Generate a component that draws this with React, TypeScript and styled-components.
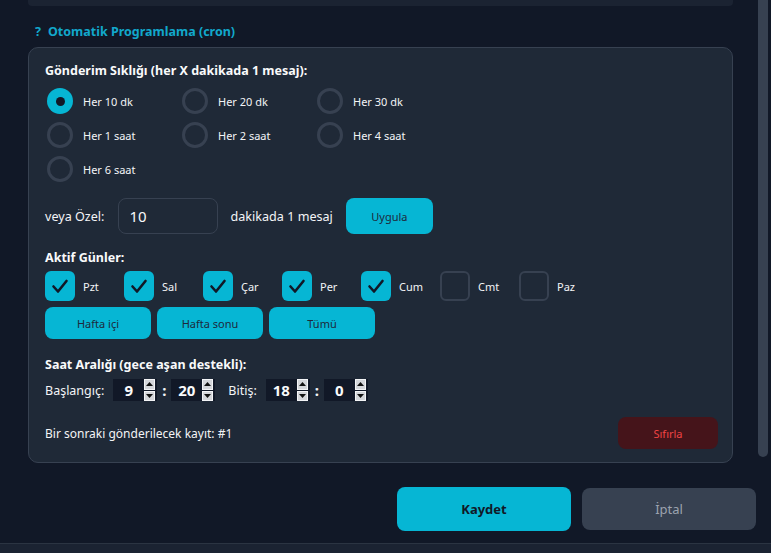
import React from 'react';
import styled, { createGlobalStyle } from 'styled-components';

const GlobalStyle = createGlobalStyle`
    html, body {
        margin: 0;
        padding: 0;
        background: #111827;
    }
    body {
        font-family: "Noto Sans", "Open Sans", sans-serif;
        color: #f3f4f6;
    }
    * {
        box-sizing: border-box;
    }
`;

const Page = styled.div`
    width: 771px;
    height: 553px;
    display: flex;
    flex-direction: column;
    overflow: hidden;
    background: #111827;
`;

const ScrollArea = styled.div`
    height: 470px;
    display: flex;
    flex-direction: row;
`;

const Content = styled.div`
    flex: 1;
    padding: 0 25px 0 28px;
    overflow: hidden;
`;

const TopStrip = styled.div`
    height: 6px;
    background: #1b2332;
    border-radius: 0 0 4px 4px;
`;

const ScrollTrack = styled.div`
    width: 13px;
    padding-right: 3px;
`;

const ScrollThumb = styled.div`
    width: 10px;
    height: 457px;
    background: #374151;
    border-radius: 0 0 5px 5px;
`;

const SectionTitle = styled.div`
    margin-top: 19px;
    padding-left: 7px;
    display: flex;
    gap: 7px;
    font-size: 12.5px;
    font-weight: 700;
    line-height: 14px;
    color: #12a8cc;
`;

const Card = styled.div`
    margin-top: 8px;
    height: 416px;
    background: #1f2937;
    border: 1px solid #374151;
    border-radius: 10px;
    padding: 14px 16px 0 16px;
`;

const Heading = styled.div<{ $gap?: number }>`
    margin-top: ${p => p.$gap ?? 0}px;
    font-size: 12.5px;
    font-weight: 700;
    line-height: 18px;
    color: #f9fafb;
`;

const RadioGrid = styled.div`
    margin-top: 8px;
    display: grid;
    grid-template-columns: repeat(3, 135px);
    row-gap: 8px;
`;

const RadioItem = styled.label`
    display: flex;
    align-items: center;
    gap: 10px;
    padding-left: 2px;
    font-size: 11px;
    color: #f3f4f6;
`;

const RadioCircle = styled.span<{ $checked?: boolean }>`
    width: 26px;
    height: 26px;
    border-radius: 50%;
    display: flex;
    align-items: center;
    justify-content: center;
    border: ${p => (p.$checked ? 'none' : '3px solid #374151')};
    background: ${p => (p.$checked ? '#06b6d4' : 'transparent')};

    &::after {
        content: '';
        display: ${p => (p.$checked ? 'block' : 'none')};
        width: 9px;
        height: 9px;
        border-radius: 50%;
        background: #111827;
    }
`;

const Row = styled.div<{ $gap?: number }>`
    margin-top: ${p => p.$gap ?? 0}px;
    display: flex;
    align-items: center;
    gap: 13px;
    font-size: 12.6px;
    color: #f3f4f6;
`;

const NumberInput = styled.div`
    width: 100px;
    height: 36px;
    border: 1px solid #374151;
    border-radius: 8px;
    padding-left: 11px;
    display: flex;
    align-items: center;
    font-size: 15px;
    color: #f9fafb;
`;

const CyanButton = styled.button<{ $w: number; $h: number }>`
    width: ${p => p.$w}px;
    height: ${p => p.$h}px;
    border: none;
    border-radius: 8px;
    background: #06b6d4;
    color: #1e293b;
    font-family: inherit;
    font-size: 11px;
    padding: 0;
`;

const DayRow = styled.div`
    margin-top: 4px;
    display: grid;
    grid-template-columns: repeat(7, 79px);
`;

const DayItem = styled.label`
    display: flex;
    align-items: center;
    gap: 8px;
    font-size: 11px;
    color: #f3f4f6;
`;

const CheckBox = styled.span<{ $checked?: boolean }>`
    width: 30px;
    height: 30px;
    border-radius: 6px;
    display: flex;
    align-items: center;
    justify-content: center;
    background: ${p => (p.$checked ? '#06b6d4' : 'transparent')};
    border: ${p => (p.$checked ? 'none' : '2px solid #374151')};
`;

const PresetRow = styled.div`
    margin-top: 6px;
    display: flex;
    gap: 6px;
`;

const TimeRow = styled.div`
    margin-top: 5px;
    display: flex;
    align-items: center;
    gap: 4px;
    font-size: 12.5px;
    color: #f3f4f6;
    height: 22px;
`;

const TimeLabel = styled.span<{ $indent?: number }>`
    margin-left: ${p => p.$indent ?? 0}px;
    margin-right: 5px;
`;

const Colon = styled.span`
    font-size: 15px;
    font-weight: 700;
    width: 6px;
    text-align: center;
`;

const Spin = styled.div`
    width: 44px;
    height: 22px;
    background: #111827;
    display: flex;
    align-items: center;
`;

const SpinValue = styled.span`
    flex: 1;
    text-align: center;
    font-size: 15px;
    font-weight: 700;
    color: #f9fafb;
`;

const SpinButtons = styled.div`
    width: 11px;
    height: 22px;
    margin-right: 2px;
    display: flex;
    flex-direction: column;
    gap: 1px;
`;

const SpinHalf = styled.span`
    flex: 1;
    background: #d4d6da;
    border: 1px solid #f3f4f6;
    display: flex;
    align-items: center;
    justify-content: center;
`;

const FooterRow = styled.div`
    margin-top: 16px;
    margin-right: -2px;
    display: flex;
    align-items: center;
    justify-content: space-between;
    font-size: 12px;
    color: #f3f4f6;
`;

const DangerButton = styled.button`
    width: 100px;
    height: 32px;
    border: none;
    border-radius: 8px;
    background: #45141a;
    color: #ef4444;
    font-family: inherit;
    font-size: 11px;
`;

const Footer = styled.div`
    height: 73px;
    padding: 17px 15px 12px 0;
    display: flex;
    justify-content: flex-end;
    align-items: center;
    gap: 11px;
`;

const DialogButton = styled.button<{ $primary?: boolean }>`
    width: 174px;
    height: ${p => (p.$primary ? 44 : 42)}px;
    border: none;
    border-radius: 8px;
    background: ${p => (p.$primary ? '#06b6d4' : '#374151')};
    color: ${p => (p.$primary ? '#111827' : '#9ca3af')};
    font-family: inherit;
    font-size: 13px;
    font-weight: ${p => (p.$primary ? 700 : 400)};
`;

const BottomStrip = styled.div`
    flex: 1;
    background: #1b2332;
    border-top: 1px solid #2b3442;
`;

const frequencies = ['Her 10 dk', 'Her 20 dk', 'Her 30 dk', 'Her 1 saat', 'Her 2 saat', 'Her 4 saat', 'Her 6 saat'];
const days = [
    { name: 'Pzt', on: true },
    { name: 'Sal', on: true },
    { name: 'Çar', on: true },
    { name: 'Per', on: true },
    { name: 'Cum', on: true },
    { name: 'Cmt', on: false },
    { name: 'Paz', on: false },
];

function CheckMark() {
    return (
        <svg width="30" height="30" viewBox="0 0 30 30">
            <polyline points="8.5,15.5 13,20.5 21.5,10" fill="none" stroke="#111827" strokeWidth="2.6" strokeLinecap="round" strokeLinejoin="round"/>
        </svg>
    );
}

function Arrow({ up }: { up?: boolean }) {
    return (
        <svg width="7" height="4" viewBox="0 0 7 4">
            <polygon points={up ? '0,4 3.5,0 7,4' : '0,0 7,0 3.5,4'} fill="#111"/>
        </svg>
    );
}

function SpinBox({ value }: { value: string }) {
    return (
        <Spin>
            <SpinValue>{value}</SpinValue>
            <SpinButtons>
                <SpinHalf><Arrow up/></SpinHalf>
                <SpinHalf><Arrow/></SpinHalf>
            </SpinButtons>
        </Spin>
    );
}

export default function App() {
    return (
        <Page>
            <GlobalStyle/>
            <ScrollArea>
                <Content>
                    <TopStrip/>
                    <SectionTitle>
                        <span>?</span>
                        <span>Otomatik Programlama (cron)</span>
                    </SectionTitle>
                    <Card>
                        <Heading>Gönderim Sıklığı (her X dakikada 1 mesaj):</Heading>
                        <RadioGrid>
                            {frequencies.map((f, i) => (
                                <RadioItem key={f}>
                                    <RadioCircle $checked={i === 0}/>
                                    {f}
                                </RadioItem>
                            ))}
                        </RadioGrid>
                        <Row $gap={16}>
                            <span>veya Özel:</span>
                            <NumberInput>10</NumberInput>
                            <span>dakikada 1 mesaj</span>
                            <CyanButton $w={87} $h={36}>Uygula</CyanButton>
                        </Row>
                        <Heading $gap={15}>Aktif Günler:</Heading>
                        <DayRow>
                            {days.map(d => (
                                <DayItem key={d.name}>
                                    <CheckBox $checked={d.on}>{d.on && <CheckMark/>}</CheckBox>
                                    {d.name}
                                </DayItem>
                            ))}
                        </DayRow>
                        <PresetRow>
                            <CyanButton $w={106} $h={32}>Hafta içi</CyanButton>
                            <CyanButton $w={106} $h={32}>Hafta sonu</CyanButton>
                            <CyanButton $w={106} $h={32}>Tümü</CyanButton>
                        </PresetRow>
                        <Heading $gap={17}>Saat Aralığı (gece aşan destekli):</Heading>
                        <TimeRow>
                            <TimeLabel>Başlangıç:</TimeLabel>
                            <SpinBox value="9"/>
                            <Colon>:</Colon>
                            <SpinBox value="20"/>
                            <TimeLabel $indent={9}>Bitiş:</TimeLabel>
                            <SpinBox value="18"/>
                            <Colon>:</Colon>
                            <SpinBox value="0"/>
                        </TimeRow>
                        <FooterRow>
                            <span>Bir sonraki gönderilecek kayıt: #1</span>
                            <DangerButton>Sıfırla</DangerButton>
                        </FooterRow>
                    </Card>
                </Content>
                <ScrollTrack>
                    <ScrollThumb/>
                </ScrollTrack>
            </ScrollArea>
            <Footer>
                <DialogButton $primary>Kaydet</DialogButton>
                <DialogButton>İptal</DialogButton>
            </Footer>
            <BottomStrip/>
        </Page>
    );
}
